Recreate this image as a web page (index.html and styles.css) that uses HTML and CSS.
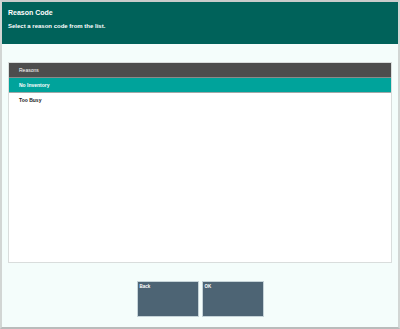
FILE: index.html
```html
<!DOCTYPE html>
<html lang="en">

<head>
  <title>Reason Code</title>
  <link rel="stylesheet" href="styles.css">
</head>

<body>
  <div class="screen">
    <div class="header">
      <h1>Reason Code</h1>
      <p>Select a reason code from the list.</p>
    </div>

    <div class="content">
      <div class="list">
        <div class="list-head">Reasons</div>
        <div class="row selected">No Inventory</div>
        <div class="row">Too Busy</div>
      </div>

      <div class="buttons">
        <button class="btn">Back</button>
        <button class="btn">OK</button>
      </div>
    </div>
  </div>
</body>

</html>
```

FILE: styles.css
```css
html, body {
  margin: 0;
  padding: 0;
}

body {
  font-family: 'Liberation Sans', Arial, sans-serif;
  background: #f4fdfb;
}

.screen {
  width: 400px;
  height: 329px;
  box-sizing: border-box;
  border-left: 2px solid #d2d6d4;
  border-right: 2px solid #d2d6d4;
  border-top: 2px solid #c9cccb;
  border-bottom: 2px solid #b9bcbb;
  display: flex;
  flex-direction: column;
}

.header {
  background: #00625a;
  color: #fff;
  height: 42px;
  padding: 7px 6px 0;
  box-sizing: border-box;
}

.header h1 {
  font-size: 7px;
  font-weight: bold;
  margin: 0 0 7px;
}

.header p {
  font-size: 6px;
  font-weight: bold;
  margin: 0;
}

.content {
  flex: 1;
  padding: 18px 6px 0;
  display: flex;
  flex-direction: column;
}

.list {
  height: 201px;
  box-sizing: border-box;
  background: #fff;
  border: 1px solid #d9dddc;
}

.list-head {
  background: #4d4d4d;
  color: #fff;
  font-size: 5px;
  height: 14px;
  line-height: 14px;
  padding-left: 10px;
  border-bottom: 1px solid #8a8a8a;
}

.row {
  font-size: 5px;
  height: 14px;
  line-height: 14px;
  padding-left: 10px;
  color: #222;
  font-weight: bold;
}

.row.selected {
  background: #00a39b;
  color: #fff;
  border-bottom: 1px solid #a0a8a8;
}

.buttons {
  display: flex;
  justify-content: center;
  gap: 3px;
  margin-top: 18px;
}

.btn {
  width: 62px;
  height: 36px;
  margin: 0;
  padding: 2px 2px;
  background: #4d6474;
  border: 1px solid #c5d3d8;
  color: #fff;
  font-family: inherit;
  font-size: 4.5px;
  font-weight: bold;
  text-align: left;
  display: flex;
  align-items: flex-start;
}
```
